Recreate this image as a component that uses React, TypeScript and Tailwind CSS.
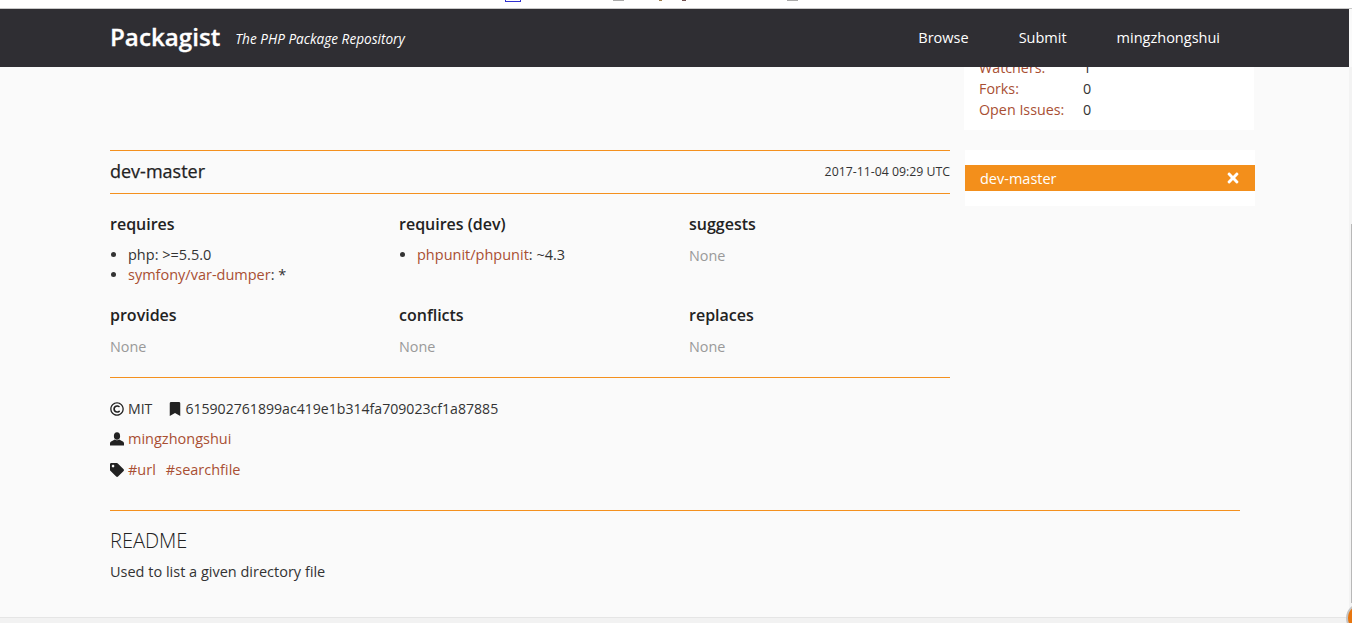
import React from "react";
import { FaBookmark, FaTag, FaTimes, FaRegCopyright } from "react-icons/fa";

const L = ({ children }: { children: React.ReactNode }) => <a className="text-[#a94f33]">{children}</a>;

function Col({ title, children, w }: { title: string; children: React.ReactNode; w: string }) {
  return (
    <div className={w}>
      <h3 className="text-[16px] leading-5 font-semibold text-[#222] mb-[11px] -mt-px">{title}</h3>
      {children}
    </div>
  );
}
const None = () => <p className="text-[#999] text-[14.4px] leading-5 pt-px">None</p>;

const UserIcon = () => (
  <svg viewBox="0 0 14 14" className="w-[14px] h-[14px] mr-[4px] fill-[#222]">
    <ellipse cx="7" cy="4" rx="3.1" ry="3.8" />
    <path d="M0 13.5 L0 11.2 C0 9.6 2.6 9.2 4.6 7.6 C5.6 8.6 8.4 8.6 9.4 7.6 C11.4 9.2 14 9.6 14 11.2 L14 13.5 Z" />
  </svg>
);

export default function App() {
  return (
    <div className="h-[623px] overflow-hidden bg-[#fafafa] text-[#333] text-[14.5px] font-['Open_Sans','Noto_Sans',sans-serif] flex flex-col relative">
      <div className="h-[9px] bg-white border-b border-[#c8c8c8] shrink-0" />
      <header className="h-[58px] w-[1349px] bg-[#2f2e33] text-white flex items-center pl-[110px] shrink-0 relative z-10">
        <span className="text-[24.2px] font-semibold -mt-[2px] [-webkit-text-stroke:0.3px_white]">Packagist</span>
        <em className="ml-[15px] text-[13.6px] mt-[2px]">The PHP Package Repository</em>
        <nav className="ml-auto mr-[129px] flex gap-[50px] text-[14.5px]">
          <span>Browse</span><span>Submit</span><span>mingzhongshui</span>
        </nav>
      </header>
      <div className="flex pl-[110px] flex-1 min-h-0">
        <main className="w-[840px] pt-[83px]">
          <div className="border-t border-t-[#f4901e] flex justify-between items-center h-[43px]">
            <h2 className="text-[18px] -mt-[2px] text-[#222] [-webkit-text-stroke:0.25px_#222]">dev-master</h2>
            <span className="text-[12.3px]">2017-11-04 09:29 UTC</span>
          </div>
          <div className="border-t border-t-[#f4901e] pt-[21px]">
            <div className="flex h-[91px]">
              <Col title="requires" w="w-[289px]">
                <ul className="list-disc pl-[18px] leading-5">
                  <li>php: &gt;=5.5.0</li>
                  <li><L>symfony/var-dumper</L>: *</li>
                </ul>
              </Col>
              <Col title="requires (dev)" w="w-[290px]">
                <ul className="list-disc pl-[18px] leading-5"><li><L>phpunit/phpunit</L>: ~4.3</li></ul>
              </Col>
              <Col title="suggests" w="flex-1"><None /></Col>
            </div>
            <div className="flex h-[71px]">
              <Col title="provides" w="w-[289px]"><None /></Col>
              <Col title="conflicts" w="w-[290px]"><None /></Col>
              <Col title="replaces" w="flex-1"><None /></Col>
            </div>
          </div>
          <div className="border-t border-t-[#f4901e] pt-[21px] flex flex-col gap-[10px] leading-5">
            <div className="flex items-center text-[14.1px]">
              <FaRegCopyright className="text-[#222] mr-[4px] text-sm" />MIT
              <FaBookmark className="text-[#222] ml-[16px] mr-[3px] text-[14px]" />615902761899ac419e1b314fa709023cf1a87885
            </div>
            <div className="flex items-center"><UserIcon /><L>mingzhongshui</L></div>
            <div className="flex items-center mt-px"><FaTag className="text-[#222] mr-1 text-sm" /><L>#url</L><span className="ml-[10px]"><L>#searchfile</L></span></div>
          </div>
          <div className="w-[1130px] mt-[30px] border-t border-t-[#f4901e] pt-[18px]">
            <h2 className="text-xl leading-6 font-light text-[#222]">README</h2>
            <p className="mt-[9px] leading-5">Used to list a given directory file</p>
          </div>
        </main>
        <aside className="ml-[14px] w-[291px]">
          <div className="bg-white w-[290px] pl-[15px] text-[14.3px] leading-[21px] -mt-[10px] grid grid-cols-[105px_1fr] content-start h-[73px]">
            <L>Watchers:</L><span className="-ml-px">1</span>
            <L>Forks:</L><span className="-ml-px">0</span>
            <L>Open Issues:</L><span className="-ml-px">0</span>
          </div>
          <div className="bg-white mt-[20px] ml-px h-[56px] pt-[15px]">
            <div className="bg-[#f38f1b] h-[26px] text-white text-[14.5px] flex items-center justify-between pl-[15px] pr-[14px]">
              <span className="mt-px">dev-master</span><FaTimes className="text-[16px]" />
            </div>
          </div>
        </aside>
      </div>
      <div className="absolute bottom-0 inset-x-0 h-[6px] bg-[#f2f2f2] border-t border-[#e5e5e5]" />
      <div className="absolute top-0 left-[505px] w-[16px] h-[2px] border-x border-b border-[#3030d0]" />
      <div className="absolute top-0 left-[613px] w-[11px] h-[1px] bg-[#aaa]" />
      <div className="absolute top-0 left-[659px] w-[3px] h-[1px] bg-[#a08050]" />
      <div className="absolute top-0 left-[682px] w-[4px] h-[1px] bg-[#705050]" />
      <div className="absolute top-0 left-[787px] w-[11px] h-[1px] bg-[#aaa]" />
      <div className="absolute top-[67px] bottom-0 left-[1349px] right-0 bg-[#f3f3f3]" />
      <div className="absolute top-[224px] bottom-[20px] left-[1351px] right-0 bg-[#b8b8b8]" />
      <div className="absolute top-[603px] left-[1346px] w-[30px] h-[30px] rounded-full bg-[#e8760f] border-2 border-[#c4c4c4]" />
    </div>
  );
}
